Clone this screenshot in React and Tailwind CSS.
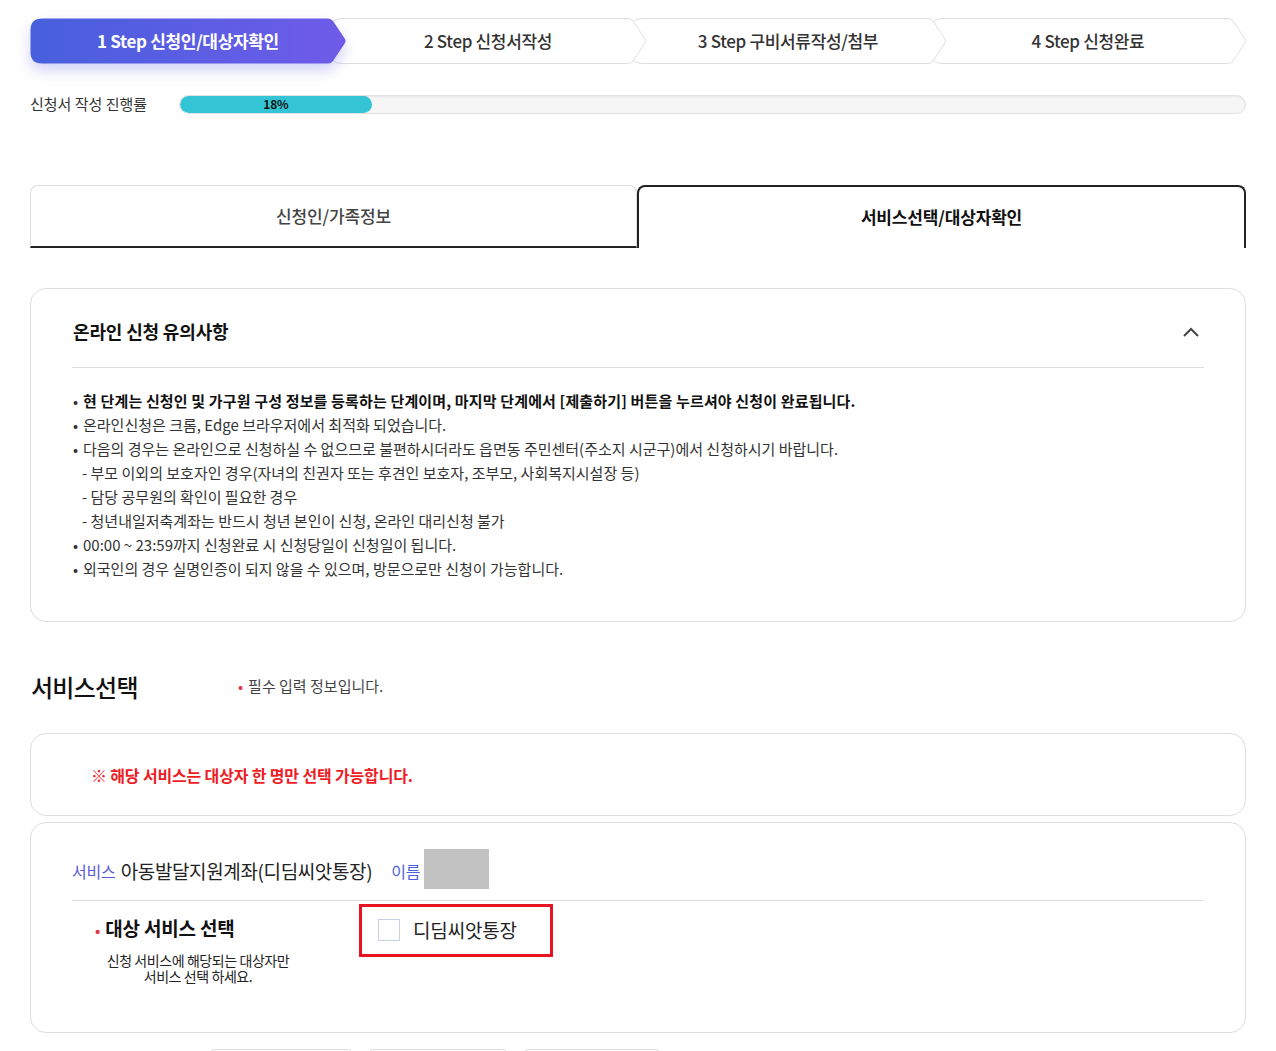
import React from 'react';

const steps = [
  { no: 1, label: '신청인/대상자확인' },
  { no: 2, label: '신청서작성' },
  { no: 3, label: '구비서류작성/첨부' },
  { no: 4, label: '신청완료' },
];

const notices = [
  { text: '현 단계는 신청인 및 가구원 구성 정보를 등록하는 단계이며, 마지막 단계에서 [제출하기] 버튼을 누르셔야 신청이 완료됩니다.', bold: true },
  { text: '온라인신청은 크롬, Edge 브라우저에서 최적화 되었습니다.' },
  { text: '다음의 경우는 온라인으로 신청하실 수 없으므로 불편하시더라도 읍면동 주민센터(주소지 시군구)에서 신청하시기 바랍니다.' },
  { text: '- 부모 이외의 보호자인 경우(자녀의 친권자 또는 후견인 보호자, 조부모, 사회복지시설장 등)', sub: true },
  { text: '- 담당 공무원의 확인이 필요한 경우', sub: true },
  { text: '- 청년내일저축계좌는 반드시 청년 본인이 신청, 온라인 대리신청 불가', sub: true },
  { text: '00:00 ~ 23:59까지 신청완료 시 신청당일이 신청일이 됩니다.' },
  { text: '외국인의 경우 실명인증이 되지 않을 수 있으며, 방문으로만 신청이 가능합니다.' },
];

function StepShape({ active }) {
  return (
    <svg
      className={
        'absolute inset-0 h-full w-full ' +
        (active ? 'drop-shadow-[0_7px_7px_rgba(90,95,225,0.28)]' : '')
      }
      viewBox="0 0 316 46"
      preserveAspectRatio="none"
    >
      <defs>
        <linearGradient id="stepGrad" x1="0" y1="0" x2="1" y2="0">
          <stop offset="0" stopColor="#4760dc" />
          <stop offset="1" stopColor="#6f5be8" />
        </linearGradient>
      </defs>
      <path
        d="M12 0.5 H298 Q301 0.5 303 3 L315 21 Q316 23 315 25 L303 43 Q301 45.5 298 45.5 H12 Q0.5 45.5 0.5 34 V12 Q0.5 0.5 12 0.5 Z"
        fill={active ? 'url(#stepGrad)' : '#ffffff'}
        stroke={active ? 'none' : '#dedede'}
        strokeWidth="1"
      />
    </svg>
  );
}

export default function App() {
  return (
    <div className="min-h-screen bg-white font-['Noto_Sans_CJK_KR','Noto_Sans',sans-serif] text-[#333] tracking-[-0.01em]">
      <div className="mx-[30px] pt-[18px]">
        {/* steps */}
        <div className="flex">
          {steps.map((s, i) => (
            <div
              key={s.no}
              className={
                'relative flex h-[46px] w-[316px] items-center justify-center ' +
                (i === 0 ? 'z-40' : i === 1 ? 'z-30 -ml-4' : i === 2 ? 'z-20 -ml-4' : 'z-10 -ml-4')
              }
            >
              <StepShape active={i === 0} />
              <span
                className={
                  'relative text-[17px] tracking-[-0.02em] ' +
                  (i === 0 ? 'font-bold text-white' : 'font-medium text-[#333]')
                }
              >
                {s.no} Step {s.label}
              </span>
            </div>
          ))}
        </div>

        {/* progress */}
        <div className="mt-[29px] flex items-center">
          <div className="w-[149px] text-[15px] tracking-normal text-[#333]">신청서 작성 진행률</div>
          <div className="h-[19px] flex-1 overflow-hidden rounded-full border border-[#e2e2e2] bg-[#f6f6f6] shadow-[inset_0_1px_2px_rgba(0,0,0,0.06)]">
            <div className="flex h-full w-[18%] items-center justify-center rounded-full bg-[#33c5d6]">
              <span className="text-[12px] font-bold text-[#111]">18%</span>
            </div>
          </div>
        </div>

        {/* tabs */}
        <div className="mt-[69px] flex">
          <div className="flex h-[63px] flex-1 items-center justify-center rounded-t-[8px] border-x border-t border-b-2 border-x-[#dddddd] border-t-[#dddddd] border-b-[#222]">
            <span className="text-[17px] font-medium text-[#444]">신청인/가족정보</span>
          </div>
          <div className="flex h-[63px] flex-1 items-center justify-center rounded-t-[8px] border-x-2 border-t-2 border-[#222]">
            <span className="text-[17px] font-bold text-[#111]">서비스선택/대상자확인</span>
          </div>
        </div>

        {/* notice */}
        <div className="mt-[40px] rounded-[16px] border border-[#dddddd] px-[41px] pb-[40px]">
          <div className="flex h-[79px] items-center justify-between border-b border-[#dddddd] pl-[1px] pt-[8px]">
            <h3 className="text-[18px] font-bold text-[#111]">온라인 신청 유의사항</h3>
            <svg width="20" height="12" viewBox="0 0 20 12" className="mr-[3px]">
              <polyline points="3,10 10,3 17,10" fill="none" stroke="#444" strokeWidth="2" />
            </svg>
          </div>
          <ul className="pt-[21px] text-[15px] leading-[24px] tracking-normal text-[#333]">
            {notices.map((n, i) => (
              <li key={i} className={'flex ' + (n.sub ? 'pl-[10px]' : '')}>
                {!n.sub && <span className="w-[11px] shrink-0 pl-[1px]">•</span>}
                <span className={n.bold ? 'font-bold tracking-[0.01em] text-[#111]' : ''}>{n.text}</span>
              </li>
            ))}
          </ul>
        </div>

        {/* service select */}
        <div className="mt-[47px] flex items-center">
          <h2 className="w-[208px] pl-[1px] text-[24px] font-medium tracking-[-0.03em] text-[#111]">서비스선택</h2>
          <p className="text-[15px] tracking-normal text-[#444]">
            <span className="mr-[5px] text-[#e3343f]">•</span>필수 입력 정보입니다.
          </p>
        </div>

        <div className="mt-[28px] flex h-[83px] items-center rounded-[16px] border border-[#dddddd] pl-[60px] pt-[2px]">
          <p className="text-[16px] font-bold text-[#ee1c25]">※ 해당 서비스는 대상자 한 명만 선택 가능합니다.</p>
        </div>

        <div className="mt-[6px] rounded-[16px] border border-[#dddddd] px-[41px] pb-[22px] pt-[26px]">
          <div className="flex items-center border-b border-[#dddddd] pb-[11px]">
            <span className="mt-[5px] text-[16px] text-[#5a5ad8]">서비스</span>
            <span className="ml-[5px] mt-[5px] text-[19px] tracking-[-0.02em] text-[#222]">아동발달지원계좌(디딤씨앗통장)</span>
            <span className="ml-[19px] mt-[5px] text-[16px] text-[#4a63e0]">이름</span>
            <div className="ml-[4px] h-[40px] w-[65px] bg-[#c2c2c2]" />
          </div>
          <div className="flex pt-[3px]">
            <div className="w-[287px] pl-[23px] pt-[10px]">
              <p className="text-[19px] font-bold text-[#111]">
                <span className="mr-[5px] text-[14px] text-[#e3343f]">•</span>대상 서비스 선택
              </p>
              <p className="mt-[10px] w-[206px] text-center text-[14px] leading-[16px] tracking-[-0.03em] text-[#222]">
                신청 서비스에 해당되는 대상자만
                <br />
                서비스 선택 하세요.
              </p>
            </div>
            <div className="flex h-[53px] w-[194px] items-center border-[3px] border-[#e8141f] pl-[16px]">
              <span className="h-[22px] w-[22px] border border-[#c9cfe0] bg-white" />
              <span className="ml-[13px] text-[19px] text-[#222]">디딤씨앗통장</span>
            </div>
          </div>
          <div className="h-[26px]" />
        </div>

        <div className="mt-[16px] flex gap-[17px] pl-[180px]">
          <div className="h-10 w-[142px] rounded-t-[4px] border border-[#dddddd]" />
          <div className="h-10 w-[138px] rounded-t-[4px] border border-[#dddddd]" />
          <div className="h-10 w-[136px] rounded-t-[4px] border border-[#dddddd]" />
        </div>
      </div>
    </div>
  );
}
